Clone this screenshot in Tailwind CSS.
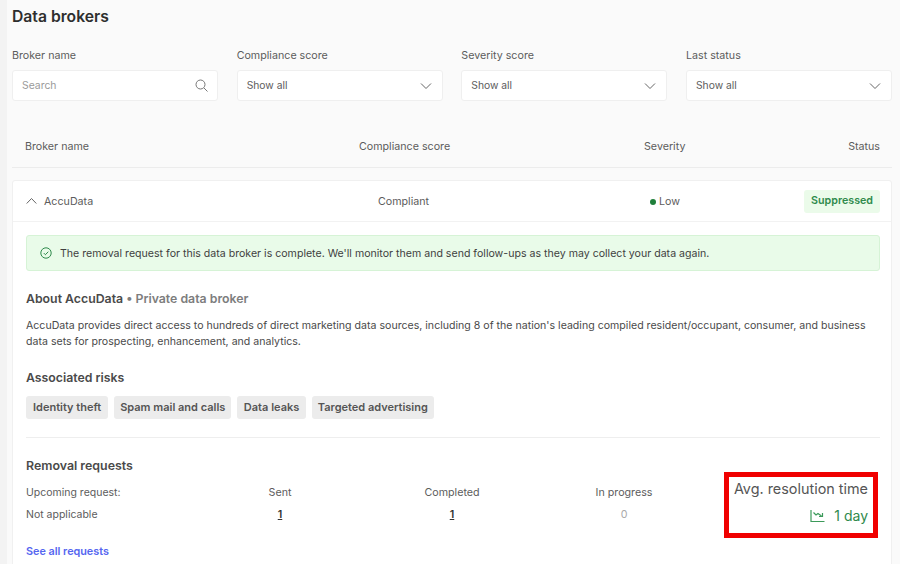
<!DOCTYPE html>
<html lang="en">
<head>
    <meta charset="UTF-8">
    <title>Data brokers</title>
    <script src="https://cdn.jsdelivr.net/npm/@tailwindcss/browser@4"></script>
</head>
<body class="bg-[#fafafa] font-['Inter',sans-serif] text-[#4a4a4a] overflow-hidden">
    <div class="relative flex h-[564px] w-[900px] overflow-hidden">
        <div class="w-[7px] shrink-0 bg-[#f3f3f3]"></div>
        <main class="w-[885px] shrink-0 pl-[5px]">
            <h1 class="h-[32px] text-[15.7px] leading-[33px] font-semibold text-[#2e2e2e]">Data brokers</h1>

            <!-- filters -->
            <div class="mt-[15px] grid grid-cols-4 gap-x-[18.67px]">
                <div>
                    <label class="block h-[23px] text-[10.7px] leading-[18px] text-[#5c5c5c]">Broker name</label>
                    <div class="flex h-[31px] items-center justify-between rounded-[3px] border border-[#efefef] bg-white pl-[9px] pr-[9px] text-[10.4px] text-[#9a9a9a]">
                        <span>Search</span>
                        <svg class="h-[13px] w-[13px]" viewBox="0 0 13 13" fill="none" stroke="#777" stroke-width="1"><circle cx="5.5" cy="5.5" r="4.5"/><path d="M9 9l3.5 3.5"/></svg>
                    </div>
                </div>
                <div>
                    <label class="block h-[23px] text-[10.7px] leading-[18px] text-[#5c5c5c]">Compliance score</label>
                    <div class="flex h-[31px] items-center justify-between rounded-[3px] border border-[#efefef] bg-white pl-[9px] pr-[10px] text-[10.3px] text-[#5c5c5c]">
                        <span>Show all</span>
                        <svg class="h-[8px] w-[12px]" viewBox="0 0 12 8" fill="none" stroke="#666" stroke-width="1"><path d="M1 1.5l5 5 5-5"/></svg>
                    </div>
                </div>
                <div>
                    <label class="block h-[23px] text-[10.7px] leading-[18px] text-[#5c5c5c]">Severity score</label>
                    <div class="flex h-[31px] items-center justify-between rounded-[3px] border border-[#efefef] bg-white pl-[9px] pr-[10px] text-[10.3px] text-[#5c5c5c]">
                        <span>Show all</span>
                        <svg class="h-[8px] w-[12px]" viewBox="0 0 12 8" fill="none" stroke="#666" stroke-width="1"><path d="M1 1.5l5 5 5-5"/></svg>
                    </div>
                </div>
                <div>
                    <label class="block h-[23px] text-[10.7px] leading-[18px] text-[#5c5c5c]">Last status</label>
                    <div class="flex h-[31px] items-center justify-between rounded-[3px] border border-[#efefef] bg-white pl-[9px] pr-[10px] text-[10.3px] text-[#5c5c5c]">
                        <span>Show all</span>
                        <svg class="h-[8px] w-[12px]" viewBox="0 0 12 8" fill="none" stroke="#666" stroke-width="1"><path d="M1 1.5l5 5 5-5"/></svg>
                    </div>
                </div>
            </div>

            <!-- table head -->
            <div class="mt-[24px] flex h-[43px] items-center border-b border-[#ececec] pl-[13px] pr-[12px] pt-[2px] text-[10.7px] text-[#5c5c5c]">
                <span class="w-[334px]">Broker name</span>
                <span class="w-[285px]">Compliance score</span>
                <span class="flex-1">Severity</span>
                <span>Status</span>
            </div>

            <!-- broker card -->
            <section class="mt-[12px] h-[400px] rounded-t-[3px] border border-[#f0f0f0] bg-white">
                <div class="flex h-[41px] items-center border-b border-[#f2f2f2] pl-[13px] pr-[11px] text-[10.7px] text-[#5c5c5c]">
                    <svg class="mr-[7px] h-[8px] w-[11px]" viewBox="0 0 11 8" fill="none" stroke="#666" stroke-width="1"><path d="M.7 6.5l4.8-5 4.8 5"/></svg>
                    <span class="w-[334px] pt-[2px]">AccuData</span>
                    <span class="w-[272px] pt-[2px]">Compliant</span>
                    <span class="flex flex-1 items-center gap-[3px] pt-[2px]"><span class="h-[6px] w-[6px] rounded-full bg-[#1f7f3b]"></span>Low</span>
                    <span class="flex h-[23px] items-center rounded-[3px] bg-[#ebfbea] px-[7px] pt-[1px] font-semibold text-[#2f8a4c]">Suppressed</span>
                </div>

                <div class="pl-[13px] pr-[11px] pt-[13px]">
                    <div class="flex h-[36px] items-center gap-[8px] rounded-[3px] border border-[#d6f3d6] bg-[#e9fbe9] pl-[13px] text-[10.6px] text-[#3f3f3f]">
                        <svg class="h-[12px] w-[12px]" viewBox="0 0 12 12" fill="none" stroke="#2f8a4c" stroke-width="1"><circle cx="6" cy="6" r="5.2"/><path d="M3.8 6.1l1.6 1.6 2.9-3"/></svg>
                        <span class="pt-[1px]">The removal request for this data broker is complete. We'll monitor them and send follow-ups as they may collect your data again.</span>
                    </div>

                    <h2 class="mt-[19px] text-[12.3px] leading-[18px] font-semibold text-[#4a4a4a]">About AccuData <span class="text-[#7d7d7d]">• Private data broker</span></h2>
                    <p class="mt-[10px] text-[10.6px] leading-[16px] text-[#4a4a4a]">AccuData provides direct access to hundreds of direct marketing data sources, including 8 of the nation's leading compiled resident/occupant, consumer, and business data sets for prospecting, enhancement, and analytics.</p>

                    <h2 class="mt-[19px] text-[12.3px] leading-[18px] font-semibold text-[#4a4a4a]">Associated risks</h2>
                    <div class="mt-[9px] flex gap-[6px]">
                        <span class="flex h-[23px] items-center rounded-[3px] bg-[#ececec] px-[7px] text-[11px] font-semibold text-[#555]">Identity theft</span>
                        <span class="flex h-[23px] items-center rounded-[3px] bg-[#ececec] px-[6px] text-[11px] font-semibold text-[#555]">Spam mail and calls</span>
                        <span class="flex h-[23px] items-center rounded-[3px] bg-[#ececec] px-[6.5px] text-[11px] font-semibold text-[#555]">Data leaks</span>
                        <span class="flex h-[23px] items-center rounded-[3px] bg-[#ececec] px-[6px] text-[11px] font-semibold text-[#555]">Targeted advertising</span>
                    </div>

                    <div class="mt-[18px] border-t border-[#eeeeee]"></div>

                    <h2 class="mt-[19px] text-[12.4px] leading-[18px] font-semibold text-[#4a4a4a]">Removal requests</h2>
                    <div class="mt-[7px] grid grid-cols-[168px_172px_172px_172px] text-[10.7px] leading-[22px] text-[#5c5c5c]">
                        <span class="text-[10.5px]">Upcoming request:</span>
                        <span class="text-center">Sent</span>
                        <span class="text-center">Completed</span>
                        <span class="text-center">In progress</span>
                        <span class="text-[10.5px]">Not applicable</span>
                        <span class="text-center font-semibold text-[#333] underline">1</span>
                        <span class="text-center font-semibold text-[#333] underline">1</span>
                        <span class="text-center text-[#aaa]">0</span>
                    </div>
                    <a class="mt-[18px] block text-[10.8px] leading-[16px] font-semibold text-[#5566f0]">See all requests</a>
                </div>
            </section>
        </main>

        <!-- highlight annotation over the screenshot -->
        <div class="absolute left-[724px] top-[472px] flex h-[66px] w-[154px] flex-col items-end border-[5px] border-[#f00000] bg-white pr-[5px]">
            <span class="mt-[3px] text-[14.4px] leading-[18px] text-[#555]">Avg. resolution time</span>
            <span class="mt-[8px] flex items-center gap-[9px] text-[14px] leading-[20px] text-[#2f8a4c]">
                <svg class="h-[14px] w-[15px]" viewBox="0 0 15 14" fill="none" stroke="#3c9a5a" stroke-width="1.2"><path d="M1 1v11.5h13.5"/><path d="M3.5 3.5l2.5 2.5 2-1.5 3.5 2.5"/><path d="M12.5 4v3.5h-3.5"/></svg>
                1 day
            </span>
        </div>
    </div>
</body>
</html>
